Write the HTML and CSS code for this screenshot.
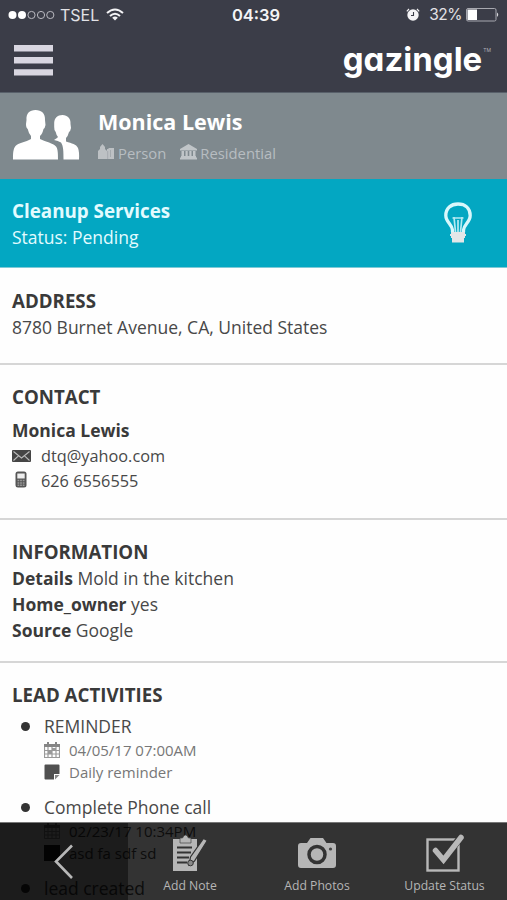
FILE: index.html
```html
<!DOCTYPE html>
<html lang="en">
<head>
<meta charset="utf-8">
<title>Gazingle</title>
<link rel="stylesheet" href="styles.css">
</head>
<body>
<div class="screen">
  <header class="top">
    <div class="status-bar">
      <div class="carrier">
        <svg class="signal" width="48" height="10" viewBox="0 0 48 10"><g fill="#fff"><circle cx="4.5" cy="5" r="4"/><circle cx="14" cy="5" r="4"/></g><g fill="none" stroke="#b9b9c0" stroke-width="1"><circle cx="23.5" cy="5" r="3.6"/><circle cx="33" cy="5" r="3.6"/><circle cx="42.3" cy="5" r="3.6"/></g></svg>
        <span class="network">TSEL</span>
        <svg class="wifi" width="18" height="13" viewBox="0 0 18 13" fill="none" stroke="#f4f4f6" stroke-width="2"><path d="M1 5Q9-2 17 5M4 8Q9 3.4 14 8"/><path d="M6.2 9.7Q9 7.2 11.8 9.7L9 12.6Z" fill="#f4f4f6" stroke="none"/></svg>
      </div>
      <div class="time">04:39</div>
      <div class="power">
        <svg class="alarm" width="14" height="13" viewBox="0 0 14 13"><circle cx="7" cy="7" r="5.7" fill="#f4f4f6"/><path d="M.8 3.300L3 1M13.200 3.300L11 1" stroke="#f4f4f6" stroke-width="1.200"/><path d="M7.500 4V7.500H5" fill="none" stroke="#3b3d48" stroke-width="1.100"/></svg>
        <span class="percent">32%</span>
        <svg class="battery" width="34" height="14" viewBox="0 0 34 14"><rect x=".5" y=".5" width="29.500" height="12.500" rx="1.500" fill="none" stroke="#a8a9b0"/><rect x="1.500" y="1.500" width="9.500" height="10.500" fill="#fff"/><path d="M31 4.500Q33.500 6.700 31 9Z" fill="#d8d8dc"/></svg>
      </div>
    </div>
    <div class="nav">
      <svg class="menu" width="39" height="31" viewBox="0 0 39 31" fill="#d8d6e0"><path d="M0 0H39V6.500H0ZM0 12H39V18.500H0ZM0 24.300H39V30.500H0Z"/></svg>
      <div class="brand">gazingle<span class="tm">TM</span></div>
    </div>
  </header>

  <section class="person">
    <svg class="people" width="68" height="52" viewBox="0 0 68 52" fill="#fff"><path d="M23.500 2C29.500 2 33.500 5.500 33 12L33.500 17Q33 20 31.500 21Q30.500 26 28 28V31C34 34 41 35 44 38.500C46 41 46 46 46 51.500H1C1 46 1 41 3.500 38C6 35 14 34 19 31V28Q16.500 25 15.700 21Q14 20 14 16L14.500 12C14 5.500 17.500 2 23.500 2Z"/><path d="M50.500 7C55.500 7 59 10.500 58.500 16L59 20Q58.500 23 57 24Q56 28 54 30V33.500C60 35.500 64 36 66 40Q67.500 44 67 51.500H51.500C51.500 44 51.500 38 49 34.500Q46 32.500 42 32L45 30L46 29Q44.300 27 43.700 24Q42 22 42.200 19V16C42 10 45.500 7 50.500 7Z"/></svg>
    <div class="person-info">
      <h1>Monica Lewis</h1>
      <div class="tags">
        <svg width="17" height="16" viewBox="0 0 17 16" fill="#bdc1c4"><path d="M0 15V7L2 5V3L4.500 0L7 3V5L9 7V5H10.500V4H16V15Z"/><path d="M9.700 7V15M12.500 6V13" stroke="#a5abaf"/></svg>
        <span class="tag-person">Person</span>
        <svg width="17" height="16" viewBox="0 0 17 16" fill="#c0c5c8"><path d="M0 5L8.500 0L17 5V6.500H0ZM1.500 7H4V12H1.500ZM5.500 7H7.700V12H5.500ZM9.300 7H11.500V12H9.300ZM13 7H15.500V12H13ZM1 12H16V13.500H17V15.500H0V13.500H1Z"/></svg>
        <span class="tag-home">Residential</span>
      </div>
    </div>
  </section>

  <section class="service">
    <div>
      <h2>Cleanup Services</h2>
      <p class="state">Status: Pending</p>
    </div>
    <svg class="bulb" width="30" height="42" viewBox="0 0 30 42" fill="none"><path d="M9.500 31V29C9 23.500 2.800 21 2.800 14.500C2.800 7 8 3 15 3S27.200 7 27.200 14.500C27.200 21 21 23.500 20.500 29V31" stroke="#d9f7fb" stroke-width="3.300"/><path d="M9.500 17H20.500M11 16L12.500 31M19 16L17.500 31M15 19V31" stroke="#b5eaf2" stroke-width="1.700"/><path d="M8 31H22V33H23V35H22V37H21V41.500H9V37H8V35H7V33H8Z" fill="#e4e7e8"/></svg>
  </section>

  <section class="block address">
    <h3>ADDRESS</h3>
    <p class="street">8780 Burnet Avenue, CA, United States</p>
  </section>

  <section class="block contact">
    <h3>CONTACT</h3>
    <p class="contact-name">Monica Lewis</p>
    <div class="contact-row mail"><svg width="19" height="12" viewBox="0 0 19 12"><rect width="19" height="12" rx="1" fill="#454545"/><path d="M1.500 1.500L9.500 8L17.500 1.500M1.500 10.500L6.500 5.800M17.500 10.500L12.500 5.800" fill="none" stroke="#bbb" stroke-width="1.100"/></svg><span>dtq@yahoo.com</span></div>
    <div class="contact-row phone"><svg width="19" height="17" viewBox="0 0 19 17"><rect x="3.500" y=".5" width="11" height="16" rx="2.500" fill="#555"/><rect x="5.300" y="2.500" width="7.400" height="5" fill="#eee"/><path d="M5.500 9.500H12.500M5.500 12H12.500M5.500 14.300H12.500" stroke="#999" stroke-width="1.500" stroke-dasharray="1.800 .8"/></svg><span>626 6556555</span></div>
  </section>

  <section class="block information">
    <h3>INFORMATION</h3>
    <p><b>Details</b> Mold in the kitchen</p>
    <p><b>Home_owner</b> yes</p>
    <p><b>Source</b> Google</p>
  </section>

  <section class="block activities">
    <h3>LEAD ACTIVITIES</h3>
    <ul>
      <li>
        <div class="title">REMINDER</div>
        <div class="meta"><svg width="16" height="16" viewBox="0 0 16 16"><path d="M0 2H3V0H5V2H11V0H13V2H16V5H0Z" fill="#858585"/><path d="M.5 5V15.500H15.500V5M1 8.500H15M1 12H15M4 5V15M8 5V15M12 5V15" fill="none" stroke="#999" stroke-width="1.200"/><path d="M8 6H12V9H8ZM4 9H8V12H4Z" fill="#999"/></svg><span>04/05/17 07:00AM</span></div>
        <div class="meta"><svg width="16" height="16" viewBox="0 0 16 16"><path d="M1.500 .5H14.500Q15.500 .5 15.500 1.500V10H10V15.500H1.500Q.5 15.500 .5 14.500V1.500Q.5 .5 1.500 .5Z" fill="#505050"/><path d="M11 11H15.500L11 15.500Z" fill="#888"/></svg><span>Daily reminder</span></div>
      </li>
      <li>
        <div class="title">Complete Phone call</div>
        <div class="meta covered"><svg width="16" height="16" viewBox="0 0 16 16"><path d="M0 2H3V0H5V2H11V0H13V2H16V5H0Z" fill="#858585"/><path d="M.5 5V15.500H15.500V5M1 8.500H15M1 12H15M4 5V15M8 5V15M12 5V15" fill="none" stroke="#999"/></svg><span>02/23/17 10:34PM</span></div>
        <div class="meta covered"><svg width="16" height="16" viewBox="0 0 16 16"><path d="M0 0H16V11L11 16H0Z" fill="#222"/></svg><span>asd fa sdf sd</span></div>
      </li>
      <li>
        <div class="title covered">lead created</div>
      </li>
    </ul>
  </section>

  <footer class="toolbar">
    <div class="back"><svg width="20" height="36" viewBox="0 0 20 36"><path d="M18 1.500L2 17.500L18 34" fill="none" stroke="#b8b8b8" stroke-width="2.600"/></svg></div>
    <div class="action">
      <svg width="36" height="38" viewBox="0 0 36 38"><path d="M1 5H25V37H1Z" fill="#b6b6b6"/><path d="M8 9V4H10.500Q13.500-2 16.500 4H19V9Z" fill="#b6b6b6" stroke="#444" stroke-width=".7"/><path d="M5 13.500H20M5 18.500H19M5 23.500H17M5 28.500H15" stroke="#333" stroke-width="1.800"/><path d="M35.300 6.500L31.500 4.500L18.500 23L17 31L22.500 27Z" fill="#b6b6b6" stroke="#333" stroke-width="1.200"/><circle cx="18.500" cy="29" r="2.800" fill="#888" stroke="#333"/></svg>
      <span>Add Note</span>
    </div>
    <div class="action">
      <svg width="38" height="38" viewBox="0 0 38 38"><path d="M3 9H9L12.500 4H25L28.500 9H35Q38 9 38 12V31Q38 34 35 34H3Q0 34 0 31V12Q0 9 3 9Z" fill="#b6b6b6"/><circle cx="19" cy="20.500" r="8" fill="#b6b6b6" stroke="#333" stroke-width="3.500"/><circle cx="32.500" cy="15" r="1.600" fill="#444"/></svg>
      <span>Add Photos</span>
    </div>
    <div class="action">
      <svg width="38" height="38" viewBox="0 0 38 38" fill="none" stroke="#b8b8b8"><rect x="1.500" y="5.500" width="31" height="31" stroke-width="2.400"/><path d="M10 15L17.500 25L35 3" stroke="#333" stroke-width="7"/><path d="M9.500 16.500L17.500 26L35 3.500" stroke-width="5.500" stroke-linecap="round"/></svg>
      <span>Update Status</span>
    </div>
  </footer>
</div>
</body>
</html>
```
FILE: styles.css
```css
* { box-sizing: border-box; margin: 0; padding: 0; }
svg { display: block; flex: none; }
body { background: #fefefe; font-family: "Open Sans", sans-serif; color: #484848; }
.screen { position: relative; width: 507px; height: 900px; overflow: hidden; background: #fefefe; }
span, h1, h2, h3, p, .title { white-space: nowrap; }
b, h3, .contact-name { color: #3a3a3a; }

.top { height: 93px; background: #3b3d48; border-bottom: 1px solid #58606a; color: #f4f4f6; }
.status-bar { display: grid; grid-template-columns: 1fr auto 1fr; align-items: center; height: 29px; padding: 0 7px 0 8px; font-family: Inter, sans-serif; font-size: 16.500px; }
.carrier, .power { display: flex; align-items: center; }
.power { justify-content: flex-end; }
.network { margin-left: 4px; font-size: 16px; color: #e2e2e6; }
.wifi { margin-left: 7px; }
.time { padding-left: 4px; font-weight: 600; }
.percent { margin: 0 4px 0 9px; font-size: 15.500px; letter-spacing: -.5px; color: #e2e2e6; }
.nav { display: flex; justify-content: space-between; align-items: flex-start; padding: 16px 16px 0 14px; }
.brand { display: flex; margin-top: -6px; font: 700 33px/40px Inter, sans-serif; font-feature-settings: "cv11"; color: #fff; }
.tm { margin: 0 0 0 1px; font-size: 5px; line-height: 22px; font-weight: 400; color: #b0b0b8; }

.person { display: flex; height: 86px; padding: 15px 12px 0; background: #7f898e; color: #fff; }
.person-info { margin: -1px 0 0 18px; }
h1 { font-size: 21.500px; line-height: 30px; font-weight: 700; }
.tags { display: flex; align-items: center; margin-top: 5px; font-size: 14.800px; line-height: 22px; color: #b7bdc1; }
.tags svg { margin-top: -3px; }
.tag-person { margin: 0 14px 0 3px; }
.tag-home { margin-left: 3px; }

.service { display: flex; justify-content: space-between; height: 89px; padding: 19px 34px 0 12px; background: #03a7c2; color: #e2fbff; border-bottom: 1px solid #7fc9d6; }
h2 { font-size: 18.800px; line-height: 26px; font-weight: 700; }
.state { font-size: 17.500px; line-height: 26px; }
.bulb { margin-top: 3px; }

.block { padding: 20px 12px 0; border-bottom: 2px solid #d6d6d6; font-size: 17.500px; line-height: 26px; }
h3 { font-size: 18.700px; line-height: 26px; font-weight: 700; }
.address { height: 97px; }
.contact { height: 155px; padding-top: 19px; }
.contact-name { margin-top: 7px; font-weight: 700; }
.contact-row { display: flex; align-items: center; height: 24px; font-size: 16.300px; }
.contact-row span { margin-left: 10px; }
.mail { height: 26px; }
.phone svg { margin-top: -4px; }
.information { height: 143px; padding-top: 19px; }
.activities { border: 0; padding-top: 19px; }
ul { list-style: none; }
li { position: relative; height: 81px; padding: 5px 0 0 32px; }
li::before { content: ""; position: absolute; left: 9px; top: 14px; width: 9px; height: 9px; border-radius: 50%; background: #333; }
.title { line-height: 26px; }
.meta { display: flex; align-items: center; height: 22px; font-size: 15px; line-height: 22px; color: #777; }
.meta span { margin-left: 9px; }
.covered { color: #444; }

.toolbar { position: absolute; left: 0; right: 0; bottom: 0; height: 78px; display: grid; grid-template-columns: 128px 124px 130px 125px; background: rgba(0, 0, 0, .8); border-top: 1px solid #777; color: #b6b6b6; }
.back { display: flex; align-items: center; justify-content: center; background: rgba(0, 0, 0, .45); }
.action { display: flex; flex-direction: column; align-items: center; padding-top: 11px; font-size: 12.200px; line-height: 18px; }
.action span { margin-top: 5px; }
```
